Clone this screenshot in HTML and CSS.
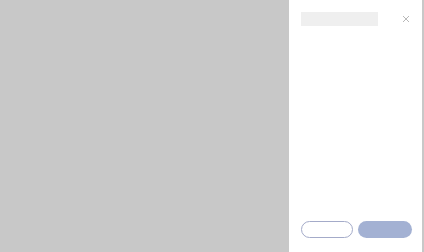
FILE: index.html
```html
<!DOCTYPE html>
<html lang="en">
<head>
<meta charset="utf-8">
<title>Drawer</title>
<link rel="stylesheet" href="styles.css">
</head>
<body>
<div class="screen">
  <div class="overlay"></div>
  <aside class="drawer">
    <header class="drawer-header">
      <div class="skeleton-title"></div>
      <button class="close-btn" aria-label="Close">
        <svg width="8" height="8" viewBox="0 0 8 8"><path d="M1 1L7 7M7 1L1 7" stroke="#b8b8b8" stroke-width="1" fill="none"/></svg>
      </button>
    </header>
    <div class="drawer-body"></div>
    <footer class="drawer-footer">
      <button class="btn btn-outline"></button>
      <button class="btn btn-primary"></button>
    </footer>
  </aside>
  <div class="edge"></div>
</div>
</body>
</html>
```
FILE: styles.css
```css
html, body {
  margin: 0;
  padding: 0;
  height: 100%;
  font-family: "Liberation Sans", Arial, sans-serif;
}
.screen {
  display: flex;
  height: 252px;
  width: 424px;
  background: #c8c8c8;
}
.overlay {
  flex: 1;
}
.drawer {
  width: 133px;
  background: #ffffff;
  display: flex;
  flex-direction: column;
  box-sizing: border-box;
  padding: 12px 10px 14px 12px;
}
.edge {
  width: 2px;
}
.drawer-header {
  display: flex;
  align-items: flex-start;
  justify-content: space-between;
}
.skeleton-title {
  width: 77px;
  height: 14px;
  background: #efefef;
}
.close-btn {
  border: 0;
  background: none;
  padding: 0;
  margin: 3px 2px 0 0;
  width: 8px;
  height: 8px;
  display: flex;
}
.drawer-body {
  flex: 1;
}
.drawer-footer {
  display: flex;
  gap: 5px;
}
.btn {
  height: 17px;
  border-radius: 9px;
  padding: 0;
  box-sizing: border-box;
}
.btn-outline {
  width: 52px;
  background: #ffffff;
  border: 1.5px solid #a4abc9;
}
.btn-primary {
  width: 54px;
  background: #a3b1d3;
  border: 0;
}
```
